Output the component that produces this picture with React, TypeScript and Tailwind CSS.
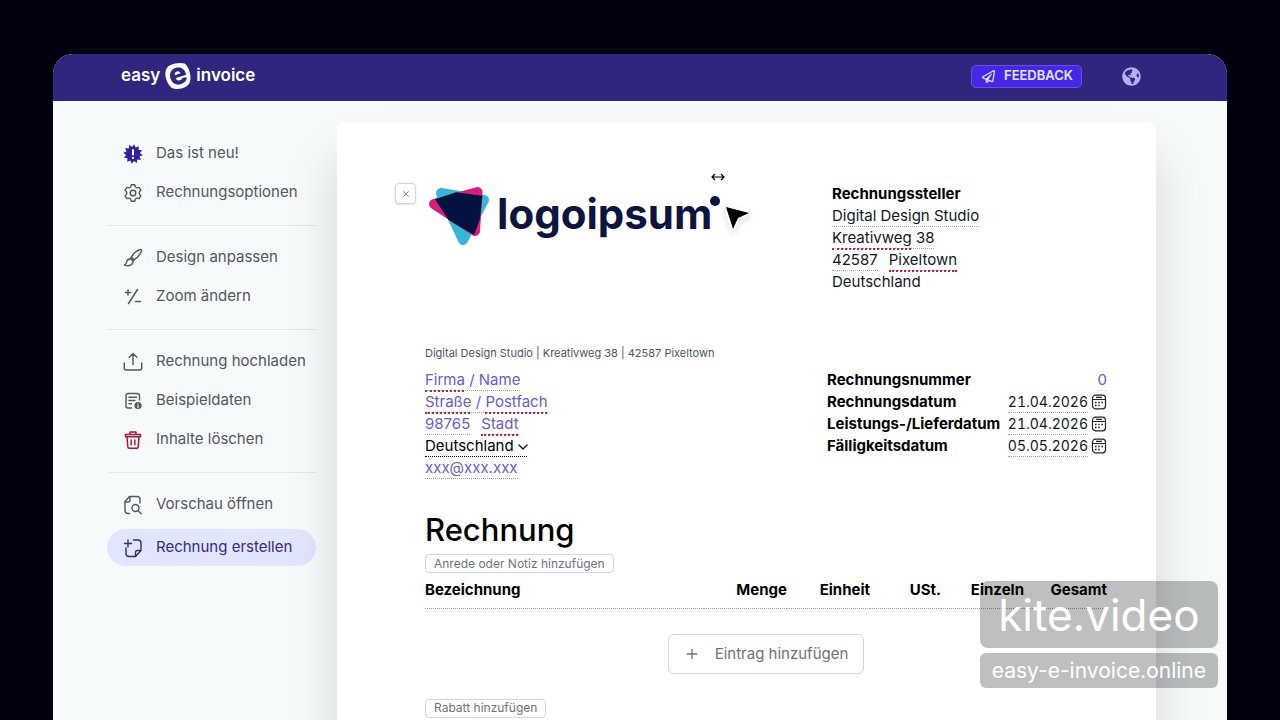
import type { ReactNode } from "react";
import { ChevronDown, Plus, X } from "lucide-react";
import { FaGlobeAmericas, FaRegPaperPlane } from "react-icons/fa";

function Icon({ children, className = "" }: { children: ReactNode; className?: string }) {
  return (
    <svg
      viewBox="0 0 20 20"
      className={`size-5 shrink-0 ${className}`}
      fill="none"
      stroke="currentColor"
      strokeWidth="1.4"
      strokeLinecap="round"
      strokeLinejoin="round"
      aria-hidden="true"
    >
      {children}
    </svg>
  );
}

// 12 spikes around the centre of the 20x20 box
const burst = Array.from({ length: 24 }, (_, i) => {
  const r = i % 2 === 0 ? 9.8 : 7;
  const a = (i * Math.PI) / 12 + 0.12;
  return `${(10 + r * Math.cos(a)).toFixed(2)},${(10 + r * Math.sin(a)).toFixed(2)}`;
}).join(" ");

const icons = {
  news: (
    <Icon className="text-[#32209a]">
      <polygon points={burst} fill="currentColor" stroke="none" />
      <path d="M10 6v4.500" stroke="white" strokeWidth="2" />
      <path d="M10 13.800v.1" stroke="white" strokeWidth="2" />
    </Icon>
  ),
  options: (
    <Icon>
      <path d="M8.300 1.800h3.400l.7 2.200 1.500.9 2.300-.5 1.700 2.900-1.600 1.800v1.800l1.600 1.800-1.700 2.900-2.300-.5-1.500.9-.7 2.200H8.300L7.600 16l-1.500-.9-2.300.5-1.700-2.900 1.600-1.800V9.100L2.100 7.300l1.700-2.900 2.300.5L7.600 4z" />
      <circle cx="10" cy="10" r="2.800" />
    </Icon>
  ),
  design: (
    <Icon>
      <path d="M7.200 10.800C9.200 7 13.700 1.800 17.500 1.500c1 0 1.300.7.900 1.700-1.400 3.700-4.900 7.400-8.600 9.600z" />
      <path d="M7 11c2.300-.3 3.800 1.900 2.700 4-1.300 2.600-4.900 3.200-8.300 2.200 1.700-.6 1.700-1.600 2.100-3C3.900 12.400 5.200 11.200 7 11z" />
      <path d="M8.300 9.300l2.500 2.300" />
    </Icon>
  ),
  zoom: (
    <Icon>
      <path d="M14.500 2.500L5.500 16.500M2.500 5.500h5M5 3v5M12.500 14.500h5" strokeWidth="1.500" />
    </Icon>
  ),
  upload: (
    <Icon>
      <path d="M10 12.500V1.500M6.200 5.200L10 1.500l3.800 3.700M1.300 11v5a2 2 0 0 0 2 2h13.400a2 2 0 0 0 2-2v-5" />
    </Icon>
  ),
  sample: (
    <Icon>
      <path d="M8.500 17H5a2 2 0 0 1-2-2V4.500a2 2 0 0 1 2-2h9.500a2 2 0 0 1 2 2V9M6 6.300h7.500M6 9.500h6M6 12.700h2.500" />
      <circle cx="15" cy="14.500" r="3.600" fill="currentColor" stroke="none" />
      <path d="M15 12.800v.1M15 14.500v1.800" stroke="white" strokeWidth="1.200" />
    </Icon>
  ),
  trash: (
    <Icon className="text-[#a5163a]">
      <path d="M2.500 4.500h15v2.200h-15zM7 4.300V2h6v2.300M4 7l.8 9.700a1.600 1.600 0 0 0 1.600 1.500h7.200a1.600 1.600 0 0 0 1.600-1.500L16 7M8.200 10v4.800M11.800 10v4.800" strokeWidth="1.500" />
    </Icon>
  ),
  preview: (
    <Icon>
      <path d="M6.500 18.500H5a3 3 0 0 1-3-3V6.500L6.500 1.500H14a3 3 0 0 1 3 3V8M2 7h3a2 2 0 0 0 2-2V1.700" />
      <circle cx="12.500" cy="13" r="3.500" />
      <path d="M15.200 15.700l3 3" />
    </Icon>
  ),
  create: (
    <Icon className="text-[#352b80]">
      <path d="M10.500 2H15a3 3 0 0 1 3 3v7.500L12.500 18.500H6a3 3 0 0 1-3-3V10M18 12.500h-3.500a2 2 0 0 0-2 2v4M5 2v7M1.500 5.500h7" />
    </Icon>
  ),
};

const menu = [
  [
    { label: "Das ist neu!", icon: icons.news },
    { label: "Rechnungsoptionen", icon: icons.options },
  ],
  [
    { label: "Design anpassen", icon: icons.design },
    { label: "Zoom ändern", icon: icons.zoom },
  ],
  [
    { label: "Rechnung hochladen", icon: icons.upload },
    { label: "Beispieldaten", icon: icons.sample },
    { label: "Inhalte löschen", icon: icons.trash },
  ],
  [{ label: "Vorschau öffnen", icon: icons.preview }],
];

const dates = [
  { id: "rechnungsdatum", label: "Rechnungsdatum", value: "21.04.2026" },
  { id: "lieferdatum", label: "Leistungs-/Lieferdatum", value: "21.04.2026" },
  { id: "faelligkeit", label: "Fälligkeitsdatum", value: "05.05.2026" },
];

interface FieldProps {
  label: string;
  value: string;
  className?: string;
  // [start, width] of every misspelled word
  marks?: [number, number][];
}

function Field({ label, value, className = "", marks = [] }: FieldProps) {
  return (
    <span className="relative flex h-[22px]">
      <input
        aria-label={label}
        defaultValue={value}
        spellCheck={false}
        className={`field-sizing-content h-[22px] border-b border-dotted border-gray-400 outline-none ${className}`}
      />
      {marks.map(([left, width]) => (
        <span key={left} className="absolute -bottom-px border-b-2 border-dotted border-[#b3243f]" style={{ left, width }} />
      ))}
    </span>
  );
}

function CalendarIcon() {
  return (
    <svg viewBox="0 0 16 16" className="size-4" fill="none" stroke="#222" strokeWidth="1.2" aria-hidden="true">
      <rect x="1.500" y="1.200" width="13" height="13.600" rx="3" />
      <path d="M1.500 5.500h13M5 3.300h6" />
      <path d="M4 8.500h1.600M7.200 8.500h1.600M10.400 8.500h1.600M4 11.500h1.600M7.200 11.500h1.600" strokeWidth="1.600" />
    </svg>
  );
}

function Header() {
  return (
    <header className="flex h-[47px] shrink-0 items-center justify-between bg-[#2f267e] pr-[86px] pl-[68px] pb-[3px]">
      <a href="#" className="flex items-center gap-1 text-[17px] font-semibold text-white">
        <span>easy</span>
        <svg viewBox="0 0 28 28" className="size-7 overflow-visible" aria-hidden="true">
          <path
            d="M6 3.200C10.500 1 17.500.4 20.500 1.500c3 1.200 5.700 8.300 6 13 .3 4.800-1.200 8.300-4.500 10.200-4 2.200-10.300 3-13.500 1.500C5.300 24.600 1.700 18.300 1.400 13 1.200 8.500 2.500 4.900 6 3.200z"
            fill="white"
          />
          <text x="14" y="22" textAnchor="middle" fontSize="30" fontWeight="800" fill="#2f267e" transform="rotate(-18 14 14)">
            e
          </text>
        </svg>
        <span>invoice</span>
      </a>
      <div className="flex items-center gap-10">
        <button className="flex h-[23px] items-center gap-[9px] rounded-[5px] border border-[#6250e8] bg-[#4527e5] pr-2 pl-2.5 text-[13px] font-semibold text-indigo-100">
          <FaRegPaperPlane className="size-[13px]" />
          FEEDBACK
        </button>
        <button aria-label="Sprache" className="text-[#b3b0fa]">
          <FaGlobeAmericas className="size-[19px]" />
        </button>
      </div>
    </header>
  );
}

function Sidebar() {
  return (
    <nav className="w-[209px] shrink-0 pt-[33px] text-[15px] text-[#54575c]">
      {menu.map((group, i) => (
        <div key={i} className="border-gray-200 not-first:border-t not-first:pt-3 not-last:pb-[13px]">
          {group.map((item) => (
            <button key={item.label} className="flex h-[39px] w-full items-center gap-[13px] pl-4 text-left whitespace-nowrap">
              {item.icon}
              {item.label}
            </button>
          ))}
          {i === menu.length - 1 && (
            <button className="mt-[5px] flex h-[37px] w-full items-center gap-[13px] rounded-full bg-[#e1e5fd] pl-4 text-[#352b80]">
              {icons.create}
              Rechnung erstellen
            </button>
          )}
        </div>
      ))}
    </nav>
  );
}

function Logo() {
  return (
    <div className="relative flex items-start">
      <button
        aria-label="Logo entfernen"
        className="absolute top-0 -left-[30px] flex size-[21px] items-center justify-center rounded border border-gray-300 bg-white text-gray-500 shadow-sm"
      >
        <X className="size-2.5" />
      </button>
      <svg viewBox="0 0 62 60" className="ml-[3px] mt-[3px] h-[60px] w-[62px]" strokeWidth="10" strokeLinejoin="round" aria-hidden="true">
        <path d="M13 7L56 14 35 54z" fill="#38b6d8" stroke="#38b6d8" />
        <path d="M6 18L49.500 6 47 45z" fill="#d81e7c" stroke="#d81e7c" />
        {/* cyan corner above the magenta edge */}
        <path d="M9 11L13 3 30 5 28 7 7 13z" fill="#38b6d8" stroke="none" />
        <path d="M7 13.300L28 6.300 54.300 9.700 52 33 46 49 20.500 34z" fill="#05123f" stroke="none" />
      </svg>
      <span className="ml-[7px] text-[42px] leading-[62px] font-bold text-[#0b1540]">logoipsum</span>
      <span className="mt-[13px] -ml-0.5 size-2.5 rounded-full bg-[#0b1540]" />
      <svg viewBox="0 0 14 8" className="absolute -top-[10px] left-[286px] h-2 w-3.5" fill="none" stroke="black" strokeWidth="1.200" aria-hidden="true">
        <path d="M1 4h12M4 1L1 4l3 3M10 1l3 3-3 3" />
      </svg>
      <svg viewBox="0 0 30 30" className="absolute top-5 left-[298px] size-[30px] drop-shadow-md" aria-hidden="true">
        <path d="M3 4l23 6-11 5-5 11z" fill="black" stroke="white" strokeWidth="4" strokeLinejoin="round" paintOrder="stroke" />
      </svg>
    </div>
  );
}

function Sheet() {
  return (
    <main className="mt-[21px] h-[1160px] min-w-0 flex-1 rounded-lg bg-white pt-[61px] pr-[49px] pl-[88px] text-[15px] leading-[22px] text-gray-900 shadow-[0_35px_50px_rgba(0,0,0,0.15)]">
      <div className="flex h-[161px] justify-between">
        <Logo />
        <section className="w-[275px]">
          <h2 className="font-bold text-black">Rechnungssteller</h2>
          <Field label="Firma" value="Digital Design Studio" />
          <Field label="Straße" value="Kreativweg 38" marks={[[0, 79]]} />
          <div className="flex gap-[11px]">
            <Field label="PLZ" value="42587" />
            <Field label="Ort" value="Pixeltown" marks={[[0, 68]]} />
          </div>
          <p>Deutschland</p>
        </section>
      </div>

      <p className="text-[11px] leading-[18px] text-gray-600">Digital Design Studio | Kreativweg 38 | 42587 Pixeltown</p>

      <div className="mt-[7px] flex justify-between">
        <section>
          <Field label="Empfänger" value="Firma / Name" className="text-[#6a5bc8]" marks={[[0, 39]]} />
          <Field label="Empfänger Straße" value="Straße / Postfach" className="text-[#6a5bc8]" marks={[[0, 45], [60, 62]]} />
          <div className="flex gap-[11px]">
            <Field label="Empfänger PLZ" value="98765" className="text-[#6a5bc8]" />
            <Field label="Empfänger Ort" value="Stadt" className="text-[#6a5bc8]" marks={[[0, 37]]} />
          </div>
          <div className="relative flex h-[22px] w-fit">
            <select aria-label="Land" className="field-sizing-content h-[22px] appearance-none border-b border-dotted border-black pr-[13px] text-black">
              <option>Deutschland</option>
            </select>
            <ChevronDown className="pointer-events-none absolute -right-1 top-1 size-4" strokeWidth={2} />
          </div>
          <Field label="E-Mail" value="xxx@xxx.xxx" className="text-[#6a5bc8]" />
        </section>

        <section className="w-[280px]">
          <div className="flex justify-between">
            <label htmlFor="rechnungsnummer" className="font-bold text-black">Rechnungsnummer</label>
            <input
              id="rechnungsnummer"
              defaultValue="0"
              className="field-sizing-content h-[22px] border-b border-dotted border-gray-300 text-[#6a5bc8]"
            />
          </div>
          {dates.map((d) => (
            <div key={d.id} className="flex items-center">
              <label htmlFor={d.id} className="mr-auto font-bold whitespace-nowrap text-black">{d.label}</label>
              <input
                id={d.id}
                defaultValue={d.value}
                className="field-sizing-content h-[22px] border-b border-dotted border-gray-400 text-[14px] tabular-nums"
              />
              <button aria-label={`${d.label} auswählen`} className="ml-[3px]">
                <CalendarIcon />
              </button>
            </div>
          ))}
        </section>
      </div>

      <h1 className="mt-[31px] text-[31px] leading-[40px] font-medium text-black">Rechnung</h1>
      <button className="mt-1 block h-[19px] rounded border border-gray-300 px-2 text-[12px] leading-4 text-gray-500">
        Anrede oder Notiz hinzufügen
      </button>

      <table className="mt-[6px] w-full table-fixed">
        <thead>
          <tr className="h-[29px] border-b border-dotted border-gray-400 align-top text-black">
            <th className="text-left font-bold">Bezeichnung</th>
            <th className="w-[83px] text-right font-bold">Menge</th>
            <th className="w-[83px] text-right font-bold">Einheit</th>
            <th className="w-[71px] text-right font-bold">USt.</th>
            <th className="w-[83px] text-right font-bold">Einzeln</th>
            <th className="w-[83px] text-right font-bold">Gesamt</th>
          </tr>
        </thead>
      </table>
      <button className="mx-auto mt-[25px] flex h-10 w-[196px] items-center justify-center gap-[15px] rounded-md border border-gray-300 text-gray-500">
        <Plus className="size-4" />
        Eintrag hinzufügen
      </button>
      <button className="mt-[25px] block h-[19px] rounded border border-gray-300 px-2 text-[12px] leading-4 text-gray-500">
        Rabatt hinzufügen
      </button>
    </main>
  );
}

export default function App() {
  return (
    <div className="relative flex h-screen flex-col overflow-hidden bg-[#02000f] px-[53px] pt-[54px] font-['Inter',sans-serif]">
      <div className="flex min-h-0 flex-1 flex-col overflow-hidden rounded-t-[20px] bg-[#f6fafb]">
        <Header />
        <div className="flex gap-[21px] pr-[71px] pl-[54px]">
          <Sidebar />
          <Sheet />
        </div>
      </div>

      <div className="absolute right-[62px] bottom-8 flex flex-col gap-[5px] text-white">
        <div className="flex h-[67px] items-center justify-center rounded-lg bg-black/25 px-4 text-[44px]">kite.video</div>
        <div className="flex h-[35px] items-center justify-center rounded-md bg-black/25 px-3 text-[21px]">easy-e-invoice.online</div>
      </div>
    </div>
  );
}
